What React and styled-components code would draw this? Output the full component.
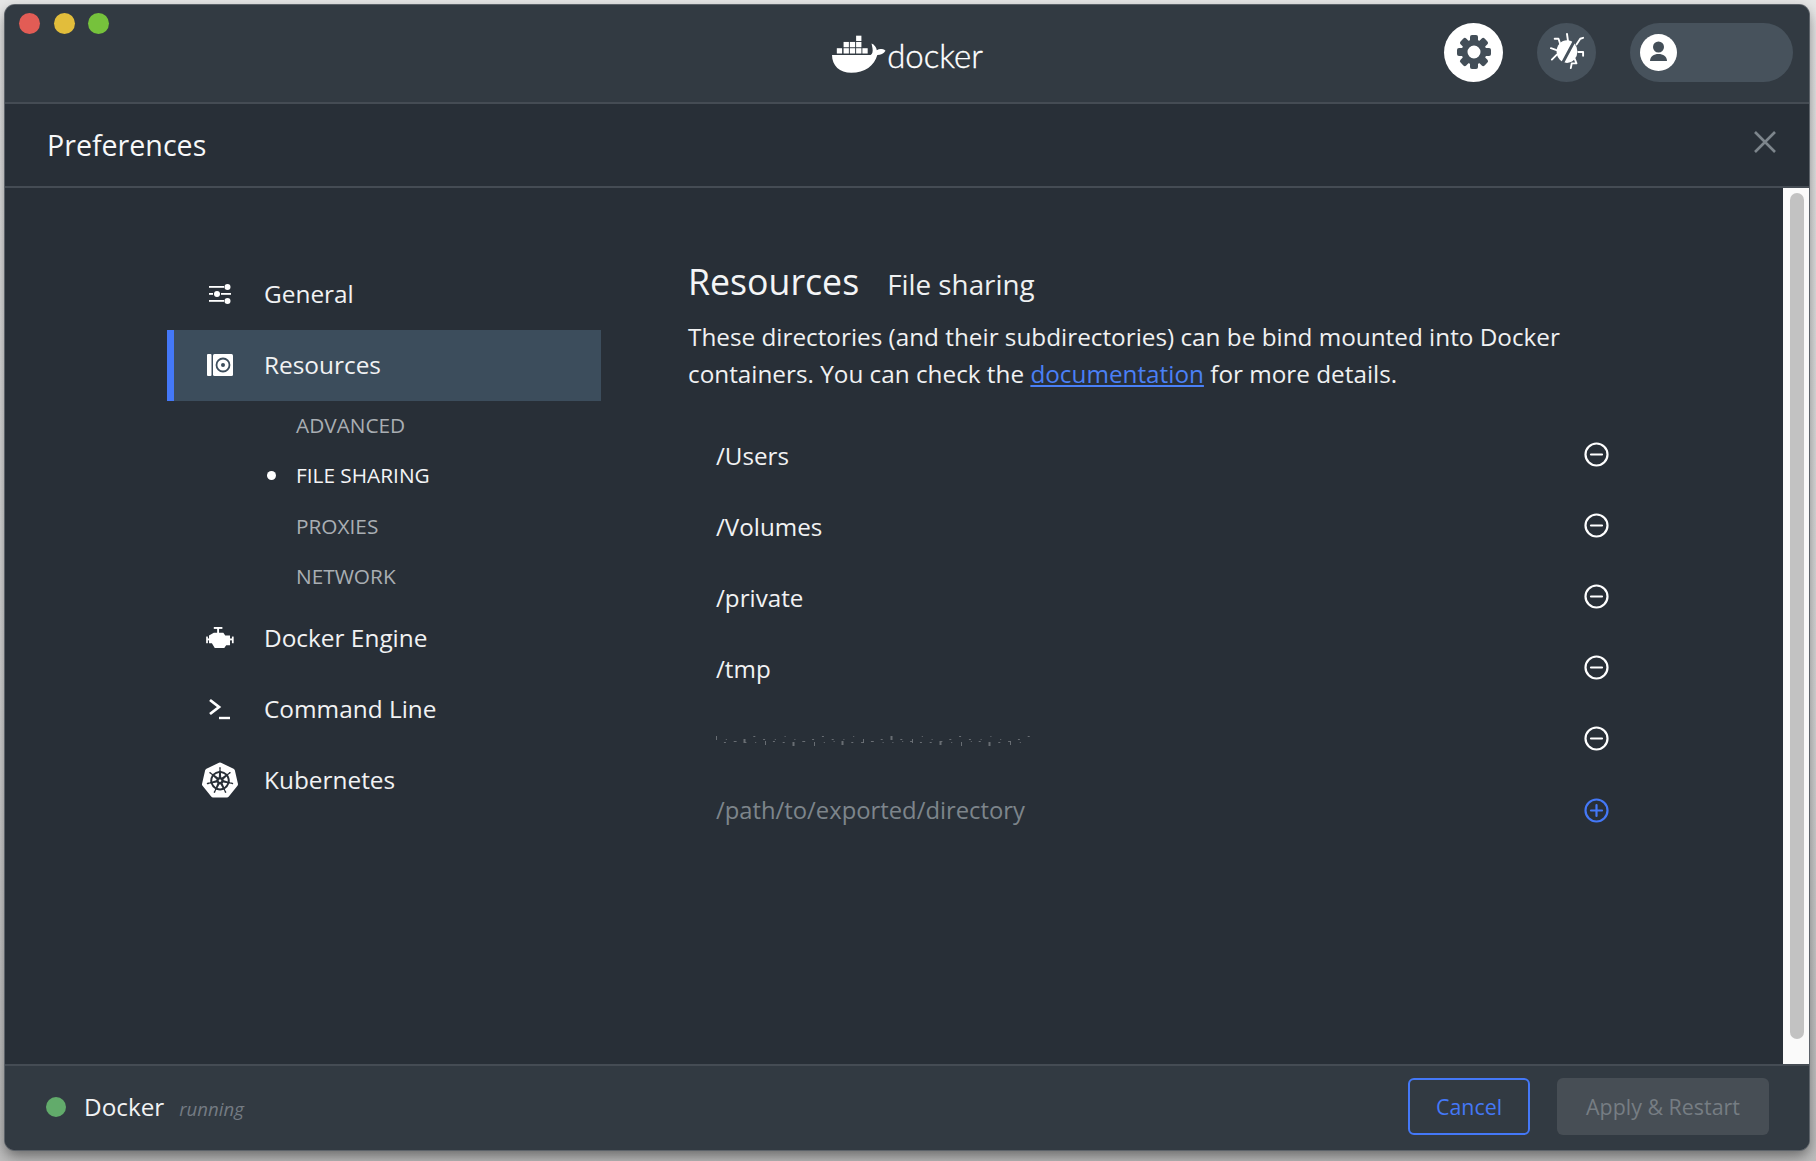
import React from 'react'
import styled, { createGlobalStyle } from 'styled-components'
import { SiKubernetes } from 'react-icons/si'

const GlobalStyle = createGlobalStyle`
  html, body {
    margin: 0;
    padding: 0;
    background: #e4e4e4;
  }
  body {
    font-family: "Open Sans", "Liberation Sans", sans-serif;
  }
`

const Page = styled.div`
  width: 1816px;
  height: 1161px;
  padding: 5px 7px 11px 5px;
  box-sizing: border-box;
  overflow: hidden;
  background: linear-gradient(#e6e6e6 0, #d8d8d8 60%, #bdbdbd 100%);
`

const Window = styled.div`
  height: 100%;
  display: flex;
  flex-direction: column;
  overflow: hidden;
  border-radius: 10px;
  background: #282f37;
  color: #f4f5f6;
  box-shadow: 0 0 0 1px #5c6269, 0 6px 14px rgba(0, 0, 0, 0.45);
`

const TitleBar = styled.header`
  flex: 0 0 99px;
  box-sizing: border-box;
  display: grid;
  grid-template-columns: 1fr auto 1fr;
  align-items: center;
  padding: 0 16px 0 14px;
  background: #323a42;
  border-bottom: 2px solid #454c54;
`

const Lights = styled.div`
  display: flex;
  gap: 13.5px;
  align-self: start;
  padding-top: 8px;
`

const Light = styled.span`
  width: 21px;
  height: 21px;
  border-radius: 50%;
  background: ${(p) => p.$color};
`

const Logo = styled.div`
  display: flex;
  align-items: flex-end;
  gap: 1px;
  margin: 1px 0 0 3px;
`

const LogoText = styled.span`
  font-family: Lato, "Open Sans", sans-serif;
  font-size: 33px;
  line-height: 36px;
  font-weight: 300;
  color: #fff;
  margin-bottom: 1px;
  -webkit-text-stroke: 0.4px #fff;
`

const TopActions = styled.div`
  display: flex;
  align-items: center;
  justify-content: flex-end;
  gap: 34px;
  margin-top: -3px;
`

const RoundButton = styled.button`
  width: 59px;
  height: 59px;
  padding: 0;
  border: 0;
  border-radius: 50%;
  display: flex;
  align-items: center;
  justify-content: center;
  color: ${(p) => (p.$active ? '#434e58' : '#fff')};
  background: ${(p) => (p.$active ? '#fff' : '#47525c')};
`

const AccountPill = styled.div`
  width: 163px;
  height: 59px;
  box-sizing: border-box;
  padding-left: 10px;
  display: flex;
  align-items: center;
  border-radius: 30px;
  background: #47525c;
`

const PrefHeader = styled.div`
  flex: 0 0 84px;
  box-sizing: border-box;
  display: flex;
  align-items: center;
  justify-content: space-between;
  padding: 0 33px 2px 42px;
  border-bottom: 2px solid #454c54;
`

const PrefTitle = styled.h1`
  margin: 0;
  font-size: 28.6px;
  font-weight: 400;
  color: #f7f8f9;
`

const CloseButton = styled.button`
  padding: 0;
  border: 0;
  background: none;
  display: flex;
  color: #7d858c;
  margin-top: -4px;
`

const Body = styled.div`
  flex: 1;
  min-height: 0;
  display: flex;
`

const Main = styled.div`
  flex: 1;
  display: flex;
  padding: 71px 0 0 162px;
`

const Scrollbar = styled.div`
  flex: 0 0 26px;
  box-sizing: border-box;
  padding: 5px 5px 25px 7px;
  background: #fafafa;
`

const ScrollThumb = styled.div`
  height: 100%;
  border-radius: 8px;
  background: #c2c2c2;
`

const Sidebar = styled.nav`
  flex: 0 0 434px;
`

const NavItem = styled.div`
  position: relative;
  height: 71px;
  display: flex;
  align-items: center;
  padding-bottom: 2px;
  box-sizing: border-box;
  padding-left: 90px;
  font-size: 24.4px;
  color: #f1f2f3;
  background: ${(p) => (p.$selected ? '#3c4d5c' : 'transparent')};
  border-left: 7px solid ${(p) => (p.$selected ? '#4478f7' : 'transparent')};
`

const NavIcon = styled.span`
  position: absolute;
  left: 24px;
  top: 0;
  bottom: 2px;
  width: 44px;
  display: flex;
  align-items: center;
  justify-content: center;
  color: #fff;
`

const SubNav = styled.div`
  margin-top: -1px;
  padding-bottom: 2px;
`

const SubItem = styled.div`
  position: relative;
  height: 50.3px;
  display: flex;
  align-items: center;
  padding-left: 129px;
  font-size: 20.8px;
  color: ${(p) => (p.$current ? '#f4f5f6' : '#a9aeb3')};

  &::before {
    content: '';
    display: ${(p) => (p.$current ? 'block' : 'none')};
    position: absolute;
    left: 100px;
    width: 9px;
    height: 9px;
    border-radius: 50%;
    background: #fff;
  }
`

const Content = styled.section`
  width: 930px;
  margin: -1px 0 0 87px;
`

const Heading = styled.div`
  display: flex;
  align-items: baseline;
  gap: 28px;
  margin-bottom: 15px;
`

const HeadingMain = styled.h2`
  margin: 0;
  font-size: 35.7px;
  line-height: 46px;
  font-weight: 400;
  color: #f4f5f6;
`

const HeadingSub = styled.span`
  font-size: 27.8px;
  color: #eef0f1;
`

const Description = styled.p`
  margin: 0 0 28px;
  width: 900px;
  font-size: 24.3px;
  line-height: 36.5px;
  color: #f0f1f2;
`

const DocLink = styled.a`
  color: #4a80f6;
  text-decoration: underline;
`

const ShareRow = styled.div`
  height: 71px;
  box-sizing: border-box;
  display: flex;
  align-items: center;
  justify-content: space-between;
  padding: 0 9px ${(p) => (p.$placeholder ? '2px' : '0')} 28px;
  font-size: ${(p) => (p.$placeholder ? '23.8px' : '24.2px')};
  color: ${(p) => (p.$placeholder ? '#7d858b' : '#f1f2f3')};
`

const RowIcon = styled.button`
  padding: 0;
  border: 0;
  background: none;
  display: flex;
  margin-top: ${(p) => (p.$add ? '2px' : '-3px')};
  color: ${(p) => (p.$add ? '#4478f7' : '#fff')};
`

const Footer = styled.footer`
  flex: 0 0 86px;
  box-sizing: border-box;
  display: flex;
  align-items: center;
  padding: 0 40px 3px 41px;
  background: #323a42;
  border-top: 2px solid #454c54;
`

const StatusDot = styled.span`
  width: 20px;
  height: 20px;
  border-radius: 50%;
  background: #62ab6b;
  margin-right: 18px;
`

const StatusName = styled.span`
  font-size: 24.3px;
  color: #f1f2f3;
  margin-right: 15px;
`

const StatusText = styled.span`
  font-size: 18.6px;
  font-style: italic;
  color: #747b83;
  margin-top: 3px;
`

const FooterActions = styled.div`
  margin-left: auto;
  display: flex;
  gap: 27px;
`

const Button = styled.button`
  height: 57px;
  box-sizing: border-box;
  padding: 0;
  width: ${(p) => p.$width}px;
  border-radius: 6px;
  font-family: inherit;
  font-size: 21.4px;
  font-weight: 500;
  color: ${(p) => (p.$disabled ? '#767d83' : '#4478f7')};
  background: ${(p) => (p.$disabled ? '#474e55' : 'transparent')};
  border: ${(p) => (p.$disabled ? '0' : '2px solid #4478f7')};
`

const DockerWhale = () => (
  <svg width="54" height="40" viewBox="0 0 56 40" fill="#fff">
    <rect x="25" y="1" width="5.5" height="5.5" />
    <rect x="18.5" y="7.5" width="5.5" height="5.5" />
    <rect x="25" y="7.5" width="5.5" height="5.5" />
    <rect x="12" y="7.5" width="5.5" height="5.5" />
    <rect x="5" y="14" width="5.5" height="5.5" />
    <rect x="12" y="14" width="5.5" height="5.5" />
    <rect x="18.5" y="14" width="5.5" height="5.5" />
    <rect x="25" y="14" width="5.5" height="5.5" />
    <rect x="31.5" y="14" width="5.5" height="5.5" />
    <path d="M0 21h40c2-1 2.5-3.500 2-7l-1-5c3 1 5 4 5.500 7 2.500-1.500 6-1.500 9 .5-2 3-5 4.500-8.500 4.500C44 32 34 39.500 20 39.500 8 39.500 0 32 0 21z" />
  </svg>
)

const GearIcon = () => {
  const teeth = [0, 45, 90, 135, 180, 225, 270, 315]
  return (
    <svg width="36" height="36" viewBox="0 0 36 36" fill="#434e58">
      {teeth.map((angle) => (
        <rect key={angle} x="14" y="1" width="8" height="10" rx="2" transform={`rotate(${angle} 18 18)`} />
      ))}
      <circle cx="18" cy="18" r="9.500" fill="none" stroke="#434e58" strokeWidth="6" />
    </svg>
  )
}

const BugIcon = () => (
  <svg width="36" height="40" viewBox="0 0 38 42" fill="none" stroke="#fff" strokeWidth="2" strokeLinecap="round" strokeLinejoin="round">
    <path d="M20 9 19 2M12 13 10 7 6 7M8 19 2 17M8 24 3 29M29 13 33 7 36 6M31 21 36 21 36 25M27 28 29 33 24 33 23 38" />
    <ellipse cx="19" cy="20.500" rx="11" ry="12" fill="#fff" stroke="none" />
    <path d="M28 7 13 35" stroke="#47525c" strokeWidth="3" />
  </svg>
)

const AccountIcon = () => (
  <svg width="37" height="37" viewBox="0 0 37 37">
    <circle cx="18.500" cy="18.500" r="18.500" fill="#fff" />
    <circle cx="18.500" cy="13" r="5.500" fill="#434e58" />
    <path fill="#434e58" d="M10 27c0-4.500 4-7 8.500-7s8.500 2.500 8.500 7z" />
  </svg>
)

const CloseIcon = () => (
  <svg width="22" height="22" viewBox="0 0 22 22" fill="none" stroke="currentColor" strokeWidth="2.600">
    <path d="M1 1 21 21M21 1 1 21" />
  </svg>
)

const GeneralIcon = () => (
  <svg width="24" height="20" viewBox="0 0 24 20" fill="#fff">
    <circle cx="19.500" cy="3" r="3" />
    <circle cx="9" cy="10" r="3" />
    <circle cx="19.500" cy="17" r="3" />
    <rect x="1" y="2" width="15" height="1.800" />
    <rect x="1" y="9" width="4" height="1.800" />
    <rect x="13" y="9" width="10" height="1.800" />
    <rect x="1" y="16" width="15" height="1.800" />
  </svg>
)

const ResourcesIcon = () => (
  <svg width="26" height="22" viewBox="0 0 26 22">
    <rect x="0" y="0" width="4.500" height="22" rx="1" fill="#fff" />
    <rect x="6" y="0" width="20" height="22" rx="1.500" fill="#fff" />
    <circle cx="16" cy="11" r="6.500" fill="none" stroke="#3c4d5c" strokeWidth="1.800" />
    <circle cx="16" cy="11" r="2" fill="#3c4d5c" />
  </svg>
)

const EngineIcon = () => (
  <svg width="28" height="21" viewBox="0 0 29 22" fill="#fff">
    <rect x="8" y="0" width="9" height="2" />
    <rect x="11.500" y="1" width="2" height="6" />
    <path d="M3 9l5-3h10l2 3h5v10h-4l-2 3H9l-3-5H3z" />
    <rect x="0" y="10" width="1.800" height="7" />
    <rect x="1" y="12" width="3" height="2" />
    <rect x="27" y="10" width="1.800" height="7" />
    <rect x="24" y="12" width="4" height="2" />
  </svg>
)

const PromptIcon = () => (
  <svg width="22" height="22" viewBox="0 0 22 22" fill="none" stroke="#fff">
    <path strokeWidth="2.800" d="M1 2 10 9 1 16" />
    <path strokeWidth="2.400" d="M10 20H21" />
  </svg>
)

const RowCircleIcon = ({ add }) => (
  <svg width="25" height="25" viewBox="0 0 25 25" fill="none" stroke="currentColor" strokeWidth="2.200" strokeLinecap="round">
    <circle cx="12.500" cy="12.500" r="11" />
    <path d="M7 12.500H18" />
    {add && <path d="M12.500 7V18" />}
  </svg>
)

// the path in this row is scrubbed in the screenshot, only some specks are left
const ScrubbedText = () => {
  const specks = []
  for (let i = 0; i < 64; i++) {
    const x = i * 4.9 + ((i * i * 7) % 4)
    const y = 4 + ((i * i * 13) % 7)
    specks.push(<rect key={i} x={x} y={y} width={1 + (i % 2)} height={1 + (i % 5 === 0 ? 3 : 0)} />)
  }
  return (
    <svg width="320" height="16" viewBox="0 0 320 16" fill="#fff" fillOpacity="0.3">
      {specks}
    </svg>
  )
}

const navTop = [{ label: 'General', icon: <GeneralIcon /> }]
const subItems = ['ADVANCED', 'FILE SHARING', 'PROXIES', 'NETWORK']
const navBottom = [
  { label: 'Docker Engine', icon: <EngineIcon /> },
  { label: 'Command Line', icon: <PromptIcon /> },
  { label: 'Kubernetes', icon: <SiKubernetes size={36} /> },
]
const folders = ['/Users', '/Volumes', '/private', '/tmp']

const App = () => {
  return (
    <Page>
      <GlobalStyle />
      <Window>
        <TitleBar>
          <Lights>
            <Light $color="#e25c55" />
            <Light $color="#e2bd3b" />
            <Light $color="#76c23c" />
          </Lights>
          <Logo>
            <DockerWhale />
            <LogoText>docker</LogoText>
          </Logo>
          <TopActions>
            <RoundButton $active>
              <GearIcon />
            </RoundButton>
            <RoundButton>
              <BugIcon />
            </RoundButton>
            <AccountPill>
              <AccountIcon />
            </AccountPill>
          </TopActions>
        </TitleBar>

        <PrefHeader>
          <PrefTitle>Preferences</PrefTitle>
          <CloseButton>
            <CloseIcon />
          </CloseButton>
        </PrefHeader>

        <Body>
          <Main>
            <Sidebar>
              {navTop.map((item) => (
                <NavItem key={item.label}>
                  <NavIcon>{item.icon}</NavIcon>
                  {item.label}
                </NavItem>
              ))}
              <NavItem $selected>
                <NavIcon>
                  <ResourcesIcon />
                </NavIcon>
                Resources
              </NavItem>
              <SubNav>
                {subItems.map((label) => (
                  <SubItem key={label} $current={label === 'FILE SHARING'}>
                    {label}
                  </SubItem>
                ))}
              </SubNav>
              {navBottom.map((item) => (
                <NavItem key={item.label}>
                  <NavIcon>{item.icon}</NavIcon>
                  {item.label}
                </NavItem>
              ))}
            </Sidebar>

            <Content>
              <Heading>
                <HeadingMain>Resources</HeadingMain>
                <HeadingSub>File sharing</HeadingSub>
              </Heading>
              <Description>
                These directories (and their subdirectories) can be bind mounted into Docker containers. You can check
                the <DocLink href="#">documentation</DocLink> for more details.
              </Description>
              {folders.map((path) => (
                <ShareRow key={path}>
                  {path}
                  <RowIcon>
                    <RowCircleIcon />
                  </RowIcon>
                </ShareRow>
              ))}
              <ShareRow>
                <ScrubbedText />
                <RowIcon>
                  <RowCircleIcon />
                </RowIcon>
              </ShareRow>
              <ShareRow $placeholder>
                /path/to/exported/directory
                <RowIcon $add>
                  <RowCircleIcon add />
                </RowIcon>
              </ShareRow>
            </Content>
          </Main>
          <Scrollbar>
            <ScrollThumb />
          </Scrollbar>
        </Body>

        <Footer>
          <StatusDot />
          <StatusName>Docker</StatusName>
          <StatusText>running</StatusText>
          <FooterActions>
            <Button $width={122}>Cancel</Button>
            <Button $width={212} $disabled>
              Apply &amp; Restart
            </Button>
          </FooterActions>
        </Footer>
      </Window>
    </Page>
  )
}

export default App
